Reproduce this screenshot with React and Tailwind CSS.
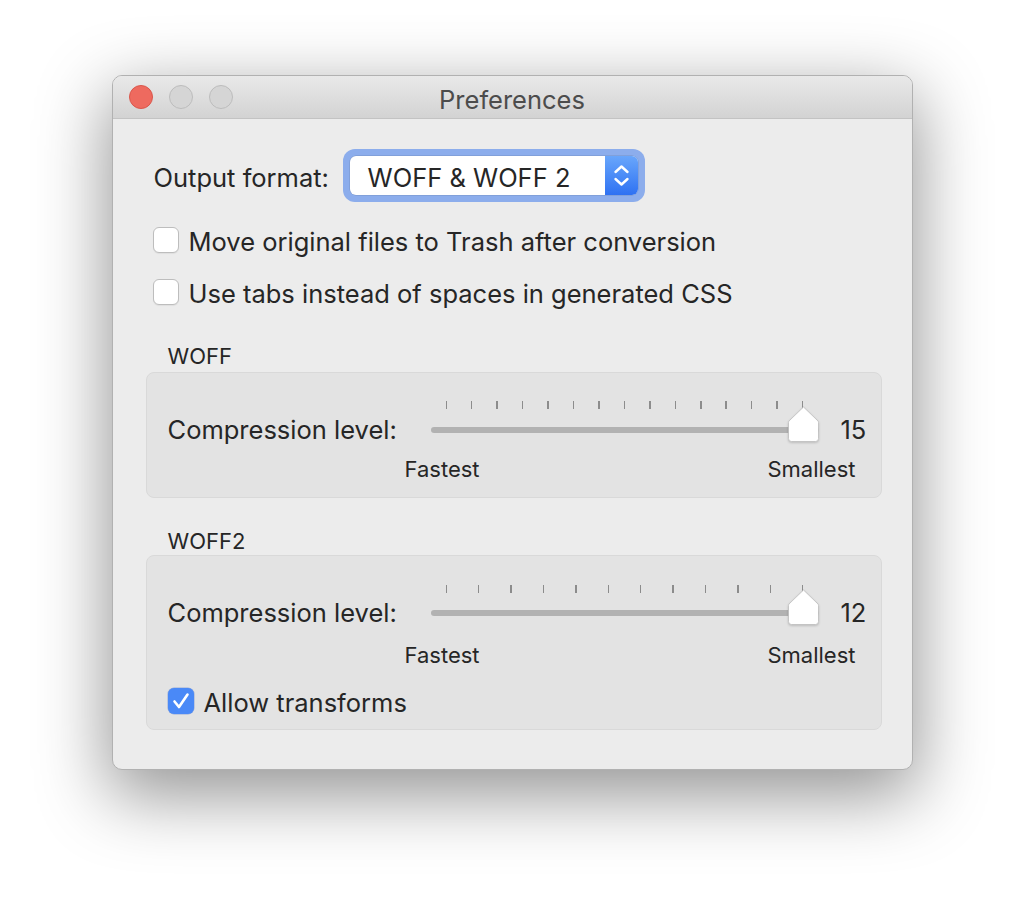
import { memo } from "react";

const TrafficLight = ({ color }) => (
    <div
        className={
            color === "red"
                ? "h-[24px] w-[24px] rounded-full border border-[#d9574c] bg-[#ee6a5f]"
                : "h-[24px] w-[24px] rounded-full border border-[#bcbcbc] bg-[#d5d5d5]"
        }
    />
);

const TitleBar = () => (
    <div className="grid h-[43px] grid-cols-[1fr_auto_1fr] items-center border-b border-[#c3c3c3] bg-gradient-to-b from-[#e9e9e9] to-[#d3d3d3]">
        <div className="flex items-center gap-[16px] pl-[16px]">
            <TrafficLight color="red" />
            <TrafficLight />
            <TrafficLight />
        </div>
        <div className="pt-[5px] text-[25.5px] leading-[32px] text-[#4c4c4c]">Preferences</div>
        <div />
    </div>
);

const Checkbox = ({ checked }) =>
    checked ? (
        <div className="flex h-[26px] w-[26px] items-center justify-center rounded-[6px] bg-[#4a89f7] shadow-[0_0_0_0.5px_rgba(40,90,200,0.4)]">
            <svg width="26" height="26" viewBox="0 0 26 26">
                <path
                    d="M6.5 13.5 L11 19 L19.5 6.5"
                    fill="none"
                    stroke="white"
                    strokeWidth="2.6"
                    strokeLinecap="round"
                    strokeLinejoin="round"
                />
            </svg>
        </div>
    ) : (
        <div className="h-[26px] w-[26px] rounded-[6px] border border-[#bdbdbd] bg-white shadow-[0_1px_1px_rgba(0,0,0,0.06)]" />
    );

const CheckRow = ({ checked, label, className }) => (
    <div className={"flex h-[30px] items-center gap-[10px] " + className}>
        <Checkbox checked={checked} />
        <span className="pt-[4px] text-[25.5px] leading-[30px]">{label}</span>
    </div>
);

const Thumb = () => (
    <svg width="33" height="37" viewBox="0 0 33 37" className="drop-shadow-[0_1px_1px_rgba(0,0,0,0.18)]">
        <path
            d="M16.5 1 L31 15 Q31.5 15.6 31.5 16.5 V32.5 Q31.5 35.5 28.5 35.5 H4.5 Q1.5 35.5 1.5 32.5 V16.5 Q1.5 15.6 2 15 Z"
            fill="white"
            stroke="#bdbdbd"
            strokeWidth="0.8"
        />
    </svg>
);

const Slider = memo(({ ticks, thumbTop, trackGap }) => (
    <div className="relative flex h-[46px] w-[388px] flex-col">
        <div className="mt-[2px] flex h-[8px] justify-between px-[15px]">
            {Array.from({ length: ticks }).map((_, i) => (
                <div key={i} className="h-[8px] w-[1.5px] bg-[#8c8c8c]" />
            ))}
        </div>
        <div className={"h-[6px] rounded-full bg-[#b2b2b2] " + trackGap} />
        <div className={"absolute left-[356px] " + thumbTop}>
            <Thumb />
        </div>
    </div>
));

const Group = ({ title, titleGap, top, children }) => (
    <>
        <div className={"pl-[22px] pt-[2px] text-[22px] leading-[26px] " + top}>{title}</div>
        <div className={"rounded-[8px] border border-[#d9d9d9] bg-[#e3e3e3] pl-[21px] " + titleGap}>
            {children}
        </div>
    </>
);

export default function App() {
    return (
        <div className="min-h-[918px] bg-white pt-[75px] font-['Inter',sans-serif] text-[#262626] antialiased">
            <div className="mx-auto flex h-[695px] w-[801px] flex-col overflow-hidden rounded-[10px] border border-[#b1b1b1] bg-[#ececec] shadow-[0_22px_70px_4px_rgba(0,0,0,0.42)]">
                <TitleBar />
                <div className="flex flex-col pl-[33px] pr-[30px] pt-[30px]">
                    {/* output format */}
                    <div className="flex items-center pl-[8px]">
                        <span className="w-[189px] pt-[5px] text-[25.5px] leading-[32px]">Output format:</span>
                        <div className="rounded-[12px] bg-[#8cadec] p-[7px]">
                            <div className="flex h-[39px] w-[288px] overflow-hidden rounded-[6px] bg-white shadow-[0_0_0_0.5px_rgba(0,0,0,0.15)]">
                                <span className="flex-1 pl-[18px] pt-[4px] text-[25.5px] leading-[35px]">WOFF &amp; WOFF 2</span>
                                <div className="flex w-[33px] items-center justify-center bg-gradient-to-b from-[#69a6fb] to-[#2f71f2]">
                                    <svg width="33" height="39" viewBox="0 0 33 39">
                                        <path d="M10.5 16 L16.5 10.5 L22.5 16" fill="none" stroke="white" strokeWidth="2.4" strokeLinecap="round" strokeLinejoin="round" />
                                        <path d="M10.5 23 L16.5 28.5 L22.5 23" fill="none" stroke="white" strokeWidth="2.4" strokeLinecap="round" strokeLinejoin="round" />
                                    </svg>
                                </div>
                            </div>
                        </div>
                    </div>

                    <CheckRow className="mt-[23px] pl-[7px]" label="Move original files to Trash after conversion" />
                    <CheckRow className="mt-[22px] pl-[7px]" label="Use tabs instead of spaces in generated CSS" />

                    <Group title="WOFF" top="mt-[34px]" titleGap="mt-[3px] pt-[26px] pb-[15px]">
                        <div className="flex items-start">
                            <span className="mt-[15px] w-[263px] text-[25.5px] leading-[32px]">Compression level:</span>
                            <Slider ticks={15} thumbTop="top-[7px]" trackGap="mt-[18px]" />
                            <span className="ml-[22px] mt-[15px] text-[25.5px] leading-[32px]">15</span>
                        </div>
                        <div className="ml-[237px] mt-[10px] flex w-[451px] justify-between text-[22px] leading-[26px]">
                            <span>Fastest</span>
                            <span>Smallest</span>
                        </div>
                    </Group>

                    <Group title="WOFF2" top="mt-[28px]" titleGap="mt-[1px] pt-[27px] pb-[13px]">
                        <div className="flex items-start">
                            <span className="mt-[14px] w-[263px] text-[25.5px] leading-[32px]">Compression level:</span>
                            <Slider ticks={12} thumbTop="top-[6px]" trackGap="mt-[17px]" />
                            <span className="ml-[22px] mt-[14px] text-[25.5px] leading-[32px]">12</span>
                        </div>
                        <div className="ml-[237px] mt-[13px] flex w-[451px] justify-between text-[22px] leading-[26px]">
                            <span>Fastest</span>
                            <span>Smallest</span>
                        </div>
                        <CheckRow checked className="mt-[18px]" label="Allow transforms" />
                    </Group>
                </div>
            </div>
        </div>
    );
}
